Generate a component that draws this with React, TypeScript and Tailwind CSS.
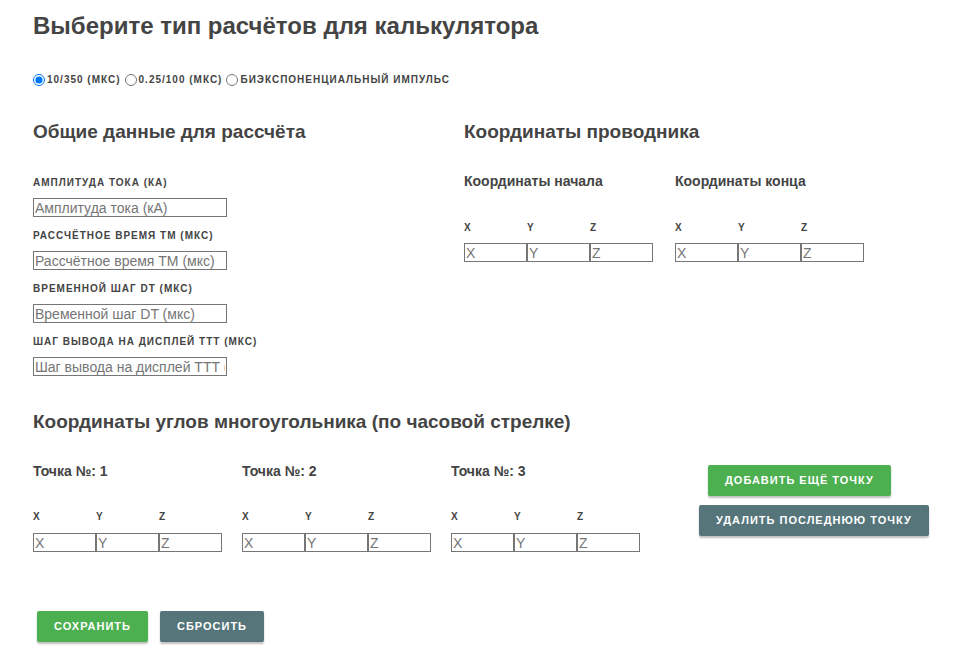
import React from 'react';

const inputCls =
  'h-[19px] border border-[#767676] bg-white px-[1px] text-[14px] leading-none text-[#333] placeholder:text-[#757575] outline-none';

const Label: React.FC<{ children: React.ReactNode }> = ({ children }) => (
  <div className="whitespace-nowrap text-[10px] font-bold uppercase leading-[12px] tracking-[1px] text-[#444]">
    {children}
  </div>
);

const XYZ: React.FC<{ inputGap?: string }> = ({ inputGap = 'mt-[10px]' }) => (
  <div className="flex">
    {['X', 'Y', 'Z'].map((c) => (
      <div key={c} className="flex w-[63px] shrink-0 flex-col">
        <Label>{c}</Label>
        <input className={`${inputCls} ${inputGap} w-[63px]`} placeholder={c} />
      </div>
    ))}
  </div>
);

const Button: React.FC<{ color: 'green' | 'slate'; className?: string; children: React.ReactNode }> = ({
  color,
  className = '',
  children,
}) => (
  <button
    className={`h-[31px] whitespace-nowrap rounded-[2px] px-[17px] text-[11px] font-bold uppercase tracking-[1px] text-white shadow-[0_2px_2px_rgba(0,0,0,0.25)] ${
      color === 'green' ? 'bg-[#4caf50]' : 'bg-[#55757a]'
    } ${className}`}
  >
    {children}
  </button>
);

const generalFields = [
  ['Амплитуда тока (кА)', 'Амплитуда тока (кА)'],
  ['Рассчётное время TM (мкс)', 'Рассчётное время TM (мкс)'],
  ['Временной шаг DT (мкс)', 'Временной шаг DT (мкс)'],
  ['Шаг вывода на дисплей TTT (мкс)', 'Шаг вывода на дисплей TTT (мкс)'],
];

export default function App() {
  return (
    <div className="min-h-screen bg-white px-[33px] pt-[12px] font-['Liberation_Sans',Arial,sans-serif] text-[#444]">
      <h1 className="text-[24px] font-bold leading-[28px]">Выберите тип расчётов для калькулятора</h1>

      {/* calculation type */}
      <div className="mt-[32px] flex items-center gap-[4px] text-[10px] font-bold uppercase tracking-[1px]">
        {['10/350 (мкс)', '0.25/100 (мкс)', 'Биэкспоненциальный импульс'].map((t, i) => (
          <label key={t} className="flex items-center gap-[2px]">
            <input type="radio" name="type" defaultChecked={i === 0} className="m-0 h-[12px] w-[12px]" />
            {t}
          </label>
        ))}
      </div>

      <div className="mt-[34px] flex">
        {/* general data */}
        <div className="w-[431px] shrink-0">
          <h2 className="text-[19px] font-bold leading-[22px]">Общие данные для рассчёта</h2>
          <div className="mt-[34px] flex flex-col">
            {generalFields.map(([label, ph]) => (
              <div key={label} className="mb-[13px] flex flex-col">
                <Label>{label}</Label>
                <input className={`${inputCls} mt-[9px] w-[194px]`} placeholder={ph} />
              </div>
            ))}
          </div>
        </div>

        {/* conductor */}
        <div>
          <h2 className="text-[19px] font-bold leading-[22px]">Координаты проводника</h2>
          <div className="mt-[29px] flex gap-[21px]">
            {['Координаты начала', 'Координаты конца'].map((t) => (
              <div key={t} className="w-[190px] shrink-0">
                <div className="text-[14px] font-bold leading-[18px]">{t}</div>
                <div className="mt-[32px]">
                  <XYZ inputGap="mt-[9px]" />
                </div>
              </div>
            ))}
          </div>
        </div>
      </div>

      {/* polygon */}
      <h2 className="mt-[22px] text-[19px] font-bold leading-[22px]">
        Координаты углов многоугольника (по часовой стрелке)
      </h2>
      <div className="mt-[29px] flex">
        {[1, 2, 3].map((n) => (
          <div key={n} className="w-[209px] shrink-0">
            <div className="text-[14px] font-bold leading-[18px]">Точка №: {n}</div>
            <div className="mt-[31px]">
              <XYZ />
            </div>
          </div>
        ))}
        <div className="ml-[39px] flex shrink-0 flex-col items-start gap-[9px] pt-[3px]">
          <Button color="green" className="ml-[9px]">
            Добавить ещё точку
          </Button>
          <Button color="slate">Удалить последнюю точку</Button>
        </div>
      </div>

      <div className="mt-[59px] flex gap-[12px] pl-[4px] pb-[20px]">
        <Button color="green">Сохранить</Button>
        <Button color="slate">Сбросить</Button>
      </div>
    </div>
  );
}
